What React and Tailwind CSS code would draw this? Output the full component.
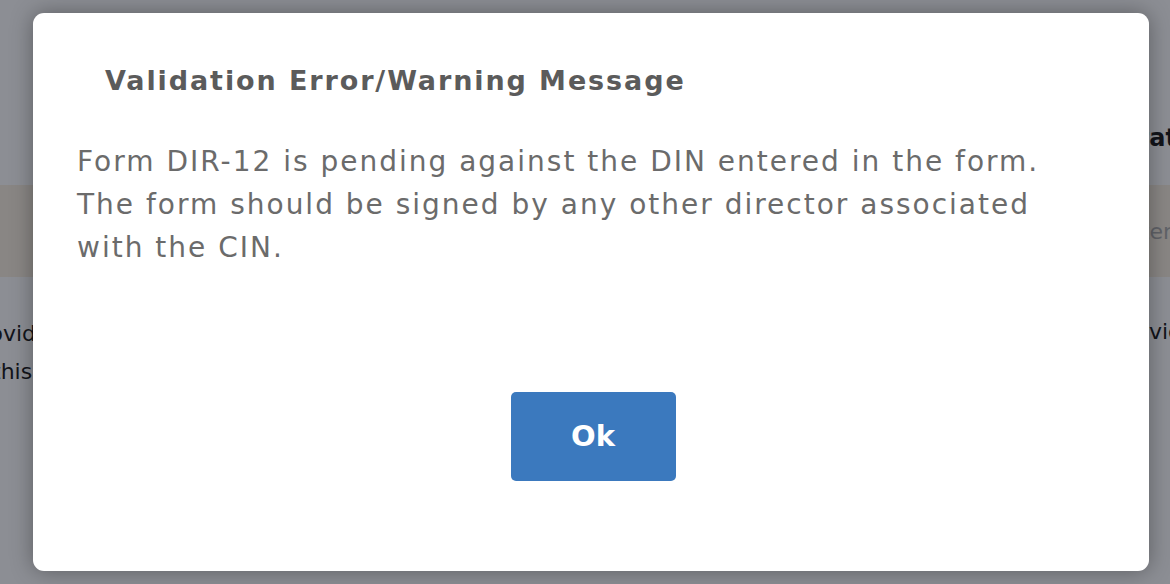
import React from 'react';

const font = { fontFamily: '"DejaVu Sans", "Noto Sans", sans-serif' };

export default function App() {
  return (
    <main className="relative h-[584px] w-[1170px] overflow-hidden bg-white" style={font}>
      {/* page behind the dialog */}
      <div className="flex flex-col">
        <div className="h-[120px]" />
        <div className="flex h-[65px] items-start justify-end">
          <span className="-mr-[7px] text-[24px] font-bold text-[#111]">Stat</span>
        </div>
        <div className="flex h-[92px] items-center justify-end bg-[#f9efe0]">
          <span className="-mr-[2px] text-[22px] text-[#aaa]">Enter</span>
        </div>
        <div className="flex items-start justify-between pt-[38px]">
          <div className="flex flex-col text-[22px] leading-[38px] text-[#111]">
            <span className="-ml-[32px]">Provide</span>
            <span className="-ml-[8px]">this</span>
          </div>
          <span className="-mr-[12px] text-[22px] text-[#111]">Provid</span>
        </div>
      </div>

      {/* overlay + dialog */}
      <div className="absolute inset-0 bg-[rgba(20,24,36,0.49)] pl-[33px] pt-[13px]">
        <div className="flex h-[558px] w-[1116px] flex-col rounded-[11px] bg-white shadow-[0_0_22px_rgba(0,0,0,0.35)]">
          <h2 className="pl-[72px] pt-[51px] text-[27px] font-bold leading-[34px] tracking-[1.9px] text-[#5b5b5b]">
            Validation Error/Warning Message
          </h2>
          <p className="pl-[44px] pt-[42px] text-[28px] leading-[43px] tracking-[2px] text-[#6b6b6b]">
            Form DIR-12 is pending against the DIN entered in the form.
            <br />
            The form should be signed by any other director associated
            <br />
            with the CIN.
          </p>
          <div className="flex justify-center pl-[4px] pt-[123px]">
            <button className="h-[89px] w-[165px] rounded-[5px] bg-[#3b79be] text-[29px] font-bold text-white">
              Ok
            </button>
          </div>
        </div>
      </div>
    </main>
  );
}
